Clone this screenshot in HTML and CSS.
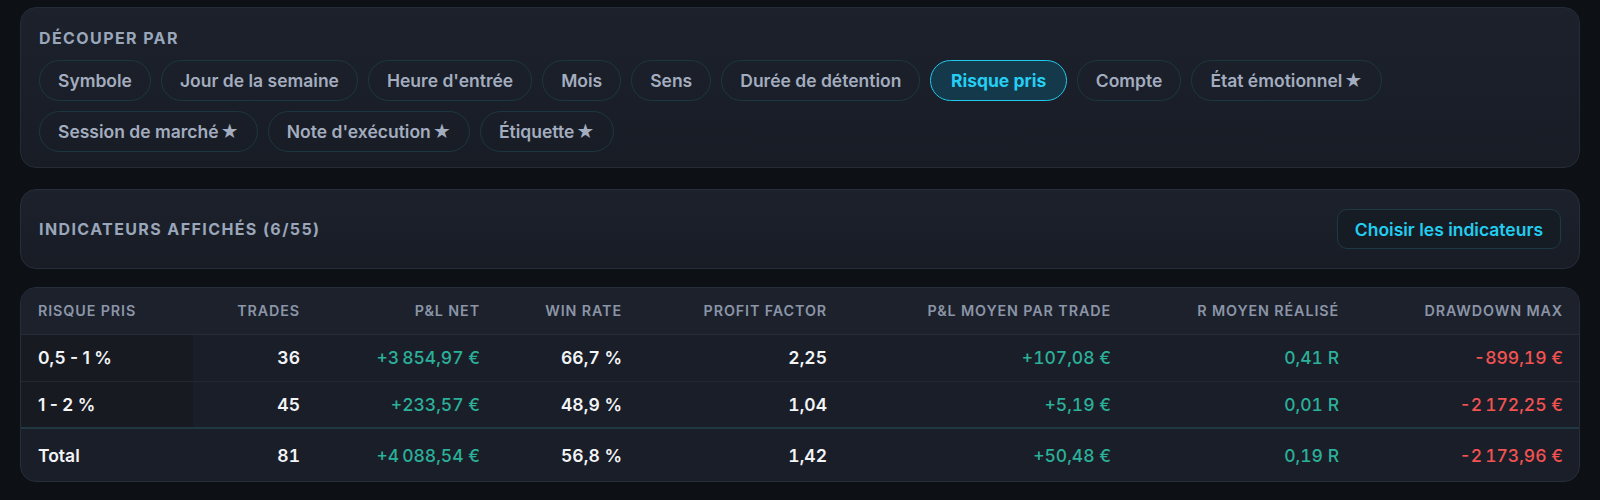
FILE: index.html
```html
<!DOCTYPE html>
<html lang="fr">
<head>
<meta charset="utf-8">
<title>Découper par</title>
<link rel="stylesheet" href="styles.css">
</head>
<body>
<div class="page">
  <section class="card split">
    <h2 class="label">Découper par</h2>
    <div class="chips">
      <button class="chip">Symbole</button>
      <button class="chip">Jour de la semaine</button>
      <button class="chip">Heure d'entrée</button>
      <button class="chip">Mois</button>
      <button class="chip">Sens</button>
      <button class="chip">Durée de détention</button>
      <button class="chip active">Risque pris</button>
      <button class="chip">Compte</button>
      <button class="chip">État émotionnel <span class="star">★</span></button>
      <button class="chip">Session de marché <span class="star">★</span></button>
      <button class="chip">Note d'exécution <span class="star">★</span></button>
      <button class="chip">Étiquette <span class="star">★</span></button>
    </div>
  </section>

  <section class="card indicators">
    <h2 class="label">Indicateurs affichés (6/55)</h2>
    <button class="pick">Choisir les indicateurs</button>
  </section>

  <section class="card table-card">
    <table class="stats">
      <colgroup>
        <col class="c1"><col class="c2"><col class="c3"><col class="c4"><col class="c5"><col class="c6"><col class="c7"><col class="c8">
      </colgroup>
      <thead>
        <tr>
          <th class="first">Risque pris</th>
          <th>Trades</th>
          <th>P&amp;L net</th>
          <th>Win rate</th>
          <th>Profit factor</th>
          <th>P&amp;L moyen par trade</th>
          <th>R moyen réalisé</th>
          <th>Drawdown max</th>
        </tr>
      </thead>
      <tbody>
        <tr>
          <td class="first">0,5 - 1 %</td>
          <td>36</td>
          <td class="pos">+3&#8239;854,97&nbsp;€</td>
          <td>66,7&nbsp;%</td>
          <td>2,25</td>
          <td class="pos">+107,08&nbsp;€</td>
          <td class="pos">0,41 R</td>
          <td class="neg">-899,19&nbsp;€</td>
        </tr>
        <tr>
          <td class="first">1 - 2 %</td>
          <td>45</td>
          <td class="pos">+233,57&nbsp;€</td>
          <td>48,9&nbsp;%</td>
          <td>1,04</td>
          <td class="pos">+5,19&nbsp;€</td>
          <td class="pos">0,01 R</td>
          <td class="neg">-2&#8239;172,25&nbsp;€</td>
        </tr>
      </tbody>
      <tfoot>
        <tr>
          <td class="first">Total</td>
          <td>81</td>
          <td class="pos">+4&#8239;088,54&nbsp;€</td>
          <td>56,8&nbsp;%</td>
          <td>1,42</td>
          <td class="pos">+50,48&nbsp;€</td>
          <td class="pos">0,19 R</td>
          <td class="neg">-2&#8239;173,96&nbsp;€</td>
        </tr>
      </tfoot>
    </table>
  </section>
</div>
</body>
</html>
```
FILE: styles.css
```css
* { box-sizing: border-box; }
html, body {
  margin: 0;
  padding: 0;
  background: #0d1015;
  font-family: Inter, "Noto Sans", "Liberation Sans", sans-serif;
  color: #e5e7eb;
}
.page {
  padding: 7px 20px 0 20px;
  display: flex;
  flex-direction: column;
}
.card {
  background: linear-gradient(180deg, #1c212c 0%, #181c25 100%);
  border: 1px solid #262e3a;
  border-radius: 16px;
}
.label {
  margin: 0;
  font-size: 16px;
  font-weight: 700;
  letter-spacing: 1.4px;
  text-transform: uppercase;
  color: #9aa6ba;
  line-height: 20px;
}
.split {
  padding: 20px 18px 15px 18px;
  border-color: #232c37;
}
.chips {
  margin-top: 12px;
  display: flex;
  flex-wrap: wrap;
  gap: 10px;
}
.chip {
  font-family: inherit;
  height: 41px;
  padding: 0 18px;
  border-radius: 21px;
  border: 1px solid #1d3740;
  background: transparent;
  color: #a3adbf;
  font-size: 17.5px;
  font-weight: 600;
  cursor: pointer;
}
.chip .star {
  margin-left: -2.5px;
}
.chip.active {
  border: 1.5px solid #1fc8ec;
  background: #14394b;
  color: #25cff3;
  font-weight: 700;
  padding: 0 19.5px;
}
.indicators {
  margin-top: 21px;
  height: 80px;
  padding: 0 18px;
  display: flex;
  align-items: center;
  justify-content: space-between;
}
.pick {
  font-family: inherit;
  height: 40px;
  padding: 0 17px;
  border-radius: 10px;
  border: 1px solid #1d3a44;
  background: #161c24;
  color: #22cdf0;
  font-size: 17.5px;
  font-weight: 600;
}
.table-card {
  margin-top: 18px;
  overflow: hidden;
  background: #1a1e28;
}
.stats {
  width: 100%;
  border-collapse: collapse;
  table-layout: fixed;
}
col.c1 { width: 172px; }
col.c2 { width: 123px; }
col.c3 { width: 180px; }
col.c4 { width: 142px; }
col.c5 { width: 205px; }
col.c6 { width: 284px; }
col.c7 { width: 228px; }
col.c8 { width: auto; }
.stats th {
  height: 46px;
  padding: 0 16px;
  text-align: right;
  font-size: 14.3px;
  font-weight: 600;
  letter-spacing: 0.9px;
  text-transform: uppercase;
  color: #8b95a7;
  background: #1c212c;
  border-bottom: 1px solid #262d39;
}
.stats th.first { text-align: left; padding-left: 17px; }
.stats td {
  height: 47px;
  padding: 0 16px;
  text-align: right;
  font-size: 17.5px;
  font-weight: 600;
  color: #f3f4f6;
  border-bottom: 1px solid #222833;
  font-variant-numeric: tabular-nums;
}
.stats tbody td.first { background: #171a21; }
.stats td.first {
  text-align: left;
  padding-left: 17px;
  font-variant-numeric: normal;
}
.stats tbody tr:last-child td { border-bottom: none; }
.stats tfoot td {
  height: 53px;
  border-top: 2px solid #1f3841;
  border-bottom: none;
}
.pos { color: #2bb099 !important; font-weight: 500 !important; }
.neg { color: #f25252 !important; font-weight: 500 !important; }
```
